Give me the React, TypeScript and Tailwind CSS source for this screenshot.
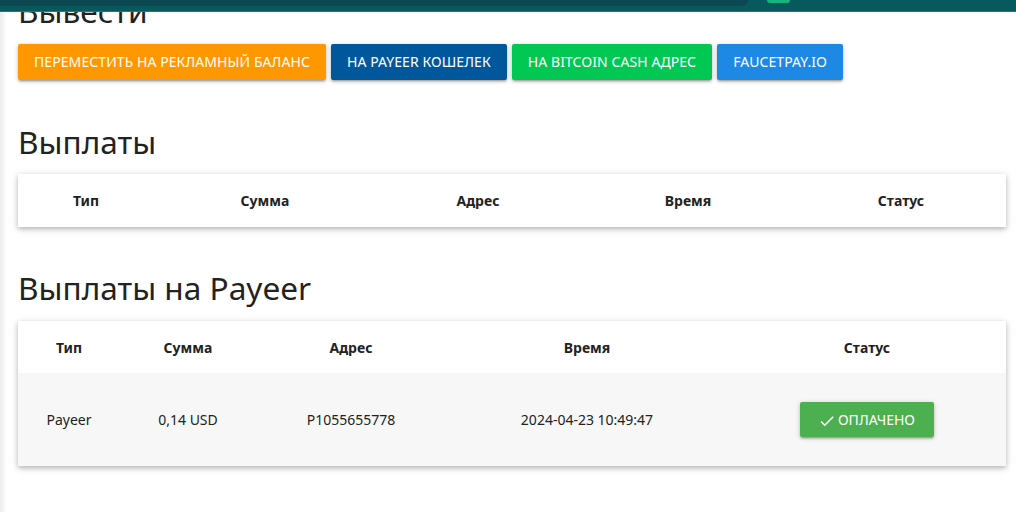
import React from "react";

const font = { fontFamily: '"Noto Sans", "Open Sans", Arial, sans-serif' };

function Btn({ color, children }: { color: string; children: React.ReactNode }) {
  return (
    <button
      className={`h-9 px-4 rounded-[2px] text-white text-[14px] tracking-[0.08px] uppercase leading-9 whitespace-nowrap shadow-[0_2px_2px_0_rgba(0,0,0,0.14),0_3px_1px_-2px_rgba(0,0,0,0.12),0_1px_5px_0_rgba(0,0,0,0.2)] ${color}`}
    >
      {children}
    </button>
  );
}

const headers = ["Тип", "Сумма", "Адрес", "Время", "Статус"];

export default function App() {
  return (
    <div className="relative w-[1016px] h-[512px] overflow-hidden bg-white text-[#222]" style={font}>
      {/* top navbar overlay */}
      <div className="absolute left-0 top-0 w-full h-[12px] bg-[#065a5d] border-b border-[#2e7376] z-10">
        <div className="absolute left-0 top-0 w-[748px] h-[6px] bg-[#0d4852] rounded-br-[8px]" />
        <div className="absolute left-[767px] top-0 w-[23px] h-[3px] bg-[#16b57f] rounded-b-[3px]" />
      </div>
      {/* left edge shadow */}
      <div className="absolute left-0 top-0 w-[7px] h-full bg-gradient-to-r from-[#ececec] to-transparent" />

      <div className="pl-[18px] pr-[10px]">
        <h4 className="text-[31.6px] leading-[40px] mt-[-9px] mb-[13px] font-normal">Вывести</h4>
        <div className="flex gap-[5px]">
          <Btn color="bg-[#ff9800]">Переместить на рекламный баланс</Btn>
          <Btn color="bg-[#01579b]">На Payeer кошелек</Btn>
          <Btn color="bg-[#00c853]">На Bitcoin Cash адрес</Btn>
          <Btn color="bg-[#1e88e5]">Faucetpay.io</Btn>
        </div>

        <h4 className="text-[31.6px] leading-[40px] mt-[42px] mb-[12px] font-normal">Выплаты</h4>
        <div className="bg-white shadow-[0_2px_5px_0_rgba(0,0,0,0.25),0_2px_10px_0_rgba(0,0,0,0.08)]">
          <table className="w-full table-fixed border-collapse">
            <colgroup>
              <col className="w-[136px]" />
              <col className="w-[222px]" />
              <col className="w-[204px]" />
              <col className="w-[216px]" />
              <col className="w-[210px]" />
            </colgroup>
            <thead>
              <tr className="h-[53px]">
                {headers.map((h) => (
                  <th key={h} className="text-[14px] font-bold text-center">{h}</th>
                ))}
              </tr>
            </thead>
          </table>
        </div>

        <h4 className="text-[31.6px] leading-[40px] mt-[41px] mb-[13px] font-normal">Выплаты на Payeer</h4>
        <div className="bg-white shadow-[0_2px_5px_0_rgba(0,0,0,0.25),0_2px_10px_0_rgba(0,0,0,0.08)]">
          <table className="w-full table-fixed border-collapse">
            <colgroup>
              <col className="w-[102px]" />
              <col className="w-[136px]" />
              <col className="w-[190px]" />
              <col className="w-[282px]" />
              <col className="w-[278px]" />
            </colgroup>
            <thead>
              <tr className="h-[52px]">
                {headers.map((h) => (
                  <th key={h} className="text-[14px] font-bold text-center">{h}</th>
                ))}
              </tr>
            </thead>
            <tbody>
              <tr className="h-[93px] bg-[#f7f7f7] text-[14px]">
                <td className="text-center">Payeer</td>
                <td className="text-center">0,14 USD</td>
                <td className="text-center">P1055655778</td>
                <td className="text-center">2024-04-23 10:49:47</td>
                <td className="text-center">
                  <span className="inline-flex items-center h-[35px] pl-[18px] pr-[19px] rounded-[2px] bg-[#4caf50] text-white uppercase text-[14px] shadow-[0_2px_2px_0_rgba(0,0,0,0.14),0_3px_1px_-2px_rgba(0,0,0,0.12),0_1px_5px_0_rgba(0,0,0,0.2)]">
                    <svg width="18" height="18" viewBox="0 0 24 24" className="mr-[2px] mt-[3px]" fill="white">
                      <path d="M9 16.17L4.83 12l-1.42 1.41L9 19 21 7l-1.41-1.41z" />
                    </svg>
                    Оплачено
                  </span>
                </td>
              </tr>
            </tbody>
          </table>
        </div>
      </div>
    </div>
  );
}
